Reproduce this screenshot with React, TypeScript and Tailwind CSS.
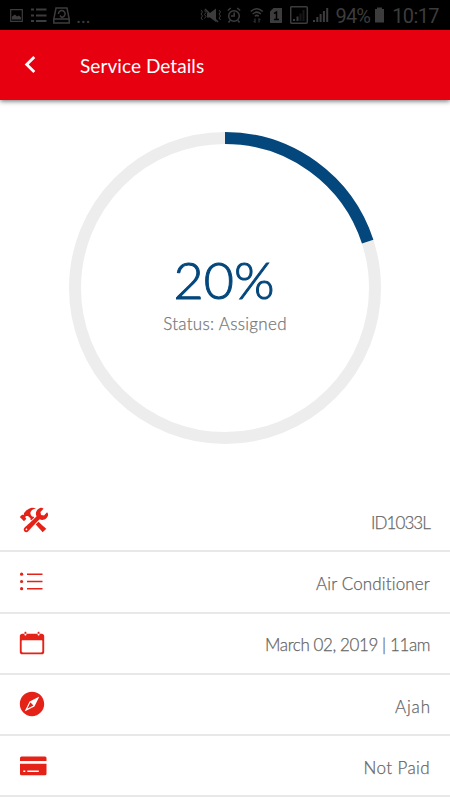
import type { ReactNode } from "react";
import { IoIosCalendar, IoIosCompass, IoIosConstruct } from "react-icons/io";

interface IconProps {
  className?: string;
}

const PROGRESS = 20;

function ListIcon({ className }: IconProps) {
  return (
    <svg width="30" height="30" viewBox="0 0 30 30" fill="currentColor" className={className}>
      <circle cx="1.600" cy="8.200" r="1.600" />
      <circle cx="1.600" cy="15.500" r="1.600" />
      <circle cx="1.600" cy="22.700" r="1.600" />
      <path d="M7 7.400h15.500V9H7zM7 14.700h15.500v1.600H7zM7 21.900h15.500v1.600H7z" />
    </svg>
  );
}

function CardIcon({ className }: IconProps) {
  return (
    <svg width="30" height="30" viewBox="0 0 30 30" fill="currentColor" className={className}>
      <path d="M1.500 5.500h23.500a1.500 1.500 0 0 1 1.500 1.500v3H0V7a1.500 1.500 0 0 1 1.500-1.500z" />
      <path
        fillRule="evenodd"
        d="M0 12.700h26.500v10a1.500 1.500 0 0 1-1.500 1.500H1.500a1.500 1.500 0 0 1-1.500-1.500zM3.300 19.500v1.600h2v-1.600zM7.300 19.500v1.600h11.500v-1.600z"
      />
    </svg>
  );
}

const details = [
  { icon: IoIosConstruct, value: "ID1033L", offset: "-ml-[1px] -mt-[2px]", tracking: "tracking-[-0.9px]" },
  { icon: ListIcon, value: "Air Conditioner", offset: "-mt-[1px]", tracking: "tracking-[0.15px]" },
  { icon: IoIosCalendar, value: "March 02, 2019 | 11am", offset: "-ml-[3px]", tracking: "tracking-[-0.4px]" },
  { icon: IoIosCompass, value: "Ajah", offset: "-ml-[3px]", tracking: "tracking-[0.9px] -mr-px" },
  { icon: CardIcon, value: "Not Paid", offset: "", tracking: "tracking-[0.4px]" },
];

function StatusIcon({ width, children }: { width: number; children: ReactNode }) {
  return (
    <svg
      width={width}
      height={20}
      viewBox={`0 0 ${width} 20`}
      fill="none"
      stroke="currentColor"
      strokeWidth={1.5}
      className="shrink-0"
    >
      {children}
    </svg>
  );
}

function StatusBar() {
  return (
    <div className="h-[30px] bg-black text-[#3c3c3c] flex items-center justify-between pl-2.5 pr-[11px] font-['Roboto',sans-serif] text-[20px] leading-[30px]">
      <div className="flex items-center">
        {/* gallery, list, disk */}
        <StatusIcon width={21}>
          <path d="M.7 4.700h11.600v11.600H.7z" strokeWidth={1.200} />
          <path d="M2 14.500v-3l3-2 2 2 2-1 2 2v2z" fill="currentColor" stroke="none" />
        </StatusIcon>
        <StatusIcon width={22}>
          <path d="M0 4.500h3M5 4.500h10.500M0 10.500h3M5 10.500h10.500M0 16h3M5 16h10.500" strokeWidth={2} />
        </StatusIcon>
        <StatusIcon width={23}>
          <path d="M3 3h11l2.200 11v4H.8v-4zM.8 14h15.400" />
          <path d="M5.500 9a3.300 3.300 0 1 1 3 3.200L7 10.500" />
        </StatusIcon>
        <span className="pt-[1px] tracking-[-0.5px]">...</span>
      </div>
      <div className="flex items-center">
        {/* vibrate, alarm, wifi, sim, signals */}
        <StatusIcon width={27}>
          <path d="M1 5l1.500 2L1 9l1.500 2L1 13l1.500 2M4.500 5.500L6 7.500l-1.500 2 1.500 2-1.500 2M19 5l1.500 2L19 9l1.500 2-1.500 2 1.500 2" strokeWidth={1} />
          <path d="M7 8h3l6-4.500v13.500l-6-4.500H7z" fill="currentColor" stroke="none" />
          <path d="M5 4l13 13" />
        </StatusIcon>
        <StatusIcon width={23}>
          <circle cx="7" cy="11" r="5.300" />
          <path d="M7.200 7.500V11H4M.8 5.500l3-2.500M13.200 5.500l-3-2.500M3 15.500l-1.500 2M11 15.500l1.500 2" />
        </StatusIcon>
        <StatusIcon width={19}>
          <path d="M.8 6.500q6-5.500 12 0M2.700 9q4.100-3.800 8.200 0M4.800 11.300q2-1.800 4 0" />
          <path d="M5 13.500v4M3.500 16L5 17.500M9 17.500v-4M10.500 15L9 13.500" strokeWidth={1} />
        </StatusIcon>
        <StatusIcon width={21}>
          <path d="M4.500 3H13v15H1V6.500z" fill="currentColor" stroke="none" />
          <path d="M5 8.500L7.500 7v7.500M5 14.500h5" stroke="black" />
        </StatusIcon>
        <StatusIcon width={23}>
          <rect x=".7" y="1.700" width="16.600" height="16.600" rx="1" />
          <path d="M3 16v-2h2v2zM6.500 16v-4.500h2V16z" fill="currentColor" stroke="none" />
          <path d="M9.500 16V8.500h2V16zM12.500 16V5h2v11z" fill="currentColor" stroke="none" opacity=".4" />
        </StatusIcon>
        <StatusIcon width={22}>
          <path d="M0 17v-2h2v2zM3.300 17v-5h2v5zM6.600 17V9h2v8zM9.900 17V6h2v11zM13.200 17V3h2v14z" fill="currentColor" stroke="none" />
        </StatusIcon>
        <span className="tracking-[-0.8px] pt-[2px]">94%</span>
        <StatusIcon width={22}>
          <path d="M5 4h2V2.500h5V4h2v13.500H5z" fill="currentColor" stroke="none" />
        </StatusIcon>
        <span className="tracking-[-0.6px] pt-[2px]">10:17</span>
      </div>
    </div>
  );
}

function ProgressRing({ percent }: { percent: number }) {
  return (
    <div className="grid place-items-center w-[312px] h-[312px] mx-auto">
      <svg viewBox="0 0 312 312" fill="none" strokeWidth={12} className="col-start-1 row-start-1 size-full -rotate-90">
        <circle cx="156" cy="156" r="150" stroke="#ededed" />
        <circle
          cx="156"
          cy="156"
          r="150"
          stroke="#04477c"
          pathLength={100}
          strokeDasharray={`${percent} 100`}
        />
      </svg>
      <div className="col-start-1 row-start-1 flex flex-col items-center pt-[9px]">
        <span className="text-[52px] leading-[58px] pb-1 pr-[2px] font-light text-[#04477c] [-webkit-text-stroke:1px_#04477c]">
          {percent}%
        </span>
        <span className="text-[17px] leading-6 font-light tracking-[0.3px] text-[#777] [-webkit-text-stroke:0.25px_#777]">
          Status: Assigned
        </span>
      </div>
    </div>
  );
}

export default function App() {
  return (
    <div className="w-[450px] h-[800px] overflow-hidden bg-white font-['Lato',sans-serif]">
      <StatusBar />
      <header className="h-[70px] bg-[#e60010] text-white flex items-center pl-[24px] shadow-[0_1px_5px_rgba(0,0,0,0.6)]">
        <button className="w-[56px]" aria-label="Back">
          <svg width="12" height="18" viewBox="0 0 12 18" fill="none" stroke="currentColor" strokeWidth={2.8}>
            <path d="M10.300 1L2.700 8.500l7.600 7.500" />
          </svg>
        </button>
        <h1 className="text-[19px] pt-[2px] tracking-[0.07px]">Service Details</h1>
      </header>

      <main className="pt-8">
        <ProgressRing percent={PROGRESS} />
        <ul className="mt-[47px]">
          {details.map(({ icon: Icon, value, offset, tracking }) => (
            <li
              key={value}
              className="h-[61.25px] px-5 flex items-center justify-between border-b-2 border-[#e8e8e8]"
            >
              <Icon size={30} className={`text-[#e42217] ${offset}`} />
              <span
                className={`pt-[4px] text-[17px] font-light text-[#666] [-webkit-text-stroke:0.25px_#666] ${tracking}`}
              >
                {value}
              </span>
            </li>
          ))}
        </ul>
      </main>
    </div>
  );
}
